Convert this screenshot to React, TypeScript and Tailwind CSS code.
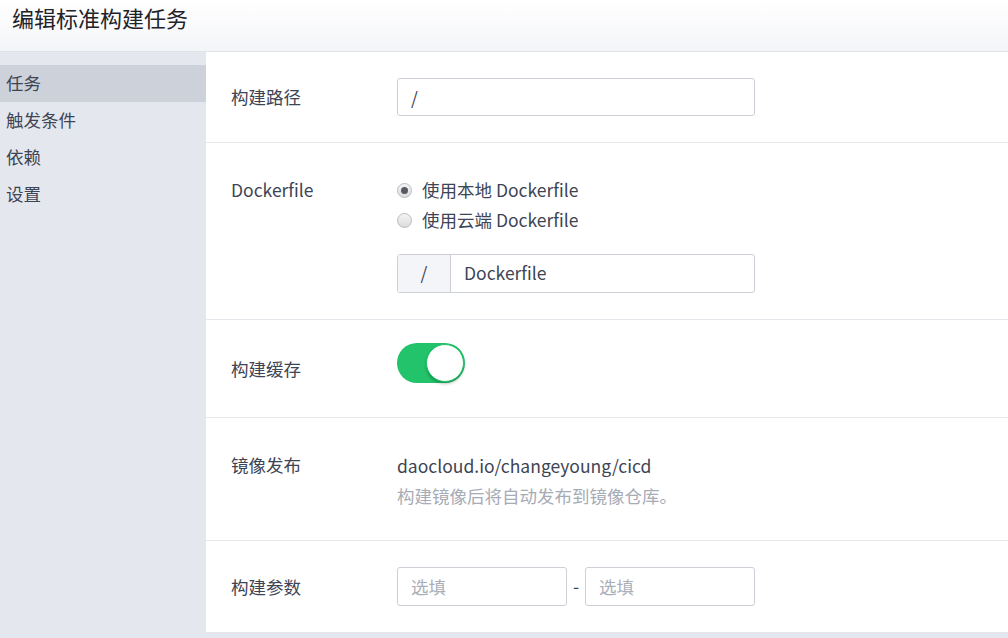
import React, { useState } from 'react';

const font = 'font-["Noto_Sans_CJK_SC","Noto_Sans",sans-serif]';

const navItems = ['任务', '触发条件', '依赖', '设置'];

function Row({ label, className, children }: { label: string; className: string; children: React.ReactNode }) {
  return (
    <div className={`flex border-b border-[#e4e6ec] pl-[25px] ${className}`}>
      <div className="w-[166px] shrink-0 text-[17.5px] leading-6 text-[#3d4454]">{label}</div>
      <div className="flex-1">{children}</div>
    </div>
  );
}

function Radio({ checked, label }: { checked: boolean; label: string }) {
  return (
    <label className="flex h-[30px] items-center gap-[10px] text-[17.5px] text-[#3d4454]">
      <span className="flex h-[15px] w-[15px] items-center justify-center rounded-full border border-[#b9bcc4] bg-gradient-to-b from-[#f4f4f4] to-[#dcdcdc]">
        {checked && <span className="h-[7px] w-[7px] rounded-full bg-[#555a63]" />}
      </span>
      {label}
    </label>
  );
}

export default function App() {
  const [active, setActive] = useState(0);
  const [local, setLocal] = useState(true);
  const [cache, setCache] = useState(true);

  return (
    <div className={`h-[638px] w-[1008px] overflow-hidden bg-[#e4e7ee] ${font}`}>
      {/* header */}
      <div className="flex h-[52px] items-start border-b border-[#e0e2e7] bg-gradient-to-b from-white to-[#f4f5f8] pl-[12px] pt-[3px]">
        <h1 className="text-[22px] leading-7 text-[#1f2329]">编辑标准构建任务</h1>
      </div>

      <div className="flex">
        {/* sidebar */}
        <aside className="w-[206px] shrink-0 pt-[13px]">
          {navItems.map((item, i) => (
            <div
              key={item}
              onClick={() => setActive(i)}
              className={`flex h-[37px] items-center pl-[6px] text-[17.5px] text-[#3d4454] ${i === active ? 'bg-[#cdd1da]' : ''}`}
            >
              {item}
            </div>
          ))}
        </aside>

        {/* form */}
        <main className="flex-1 bg-white">
          <Row label="构建路径" className="h-[91px] items-center">
            <input
              defaultValue="/"
              className="h-[38px] w-[358px] rounded-[3px] border border-[#cdcfd7] px-[13px] text-[17.5px] text-[#3d4454] outline-none"
            />
          </Row>

          <Row label="Dockerfile" className="h-[177px] pt-[35px]">
            <div className="-mt-[3px]">
              <div onClick={() => setLocal(true)}><Radio checked={local} label="使用本地 Dockerfile" /></div>
              <div onClick={() => setLocal(false)}><Radio checked={!local} label="使用云端 Dockerfile" /></div>
              <div className="mt-[19px] flex h-[39px] w-[358px] rounded-[3px] border border-[#cdcfd7] text-[17.5px] text-[#3d4454]">
                <span className="flex w-[53px] items-center justify-center border-r border-[#cdcfd7] bg-[#f4f5f8]">/</span>
                <span className="flex items-center pl-[13px]">Dockerfile</span>
              </div>
            </div>
          </Row>

          <Row label="构建缓存" className="h-[98px] items-center">
            <button
              onClick={() => setCache(!cache)}
              className={`-mt-[12px] flex h-[40px] w-[68px] items-center rounded-full p-[1px] ${cache ? 'justify-end bg-[#22c36b]' : 'justify-start bg-[#dcdfe5]'}`}
            >
              <span className="h-[38px] w-[38px] rounded-full border border-[#22c36b] bg-white shadow-[0_2px_3px_rgba(0,0,0,0.25)]" />
            </button>
          </Row>

          <Row label="镜像发布" className="h-[123px] pt-[35px]">
            <div className="-mt-[2px] text-[17.5px] leading-[30px]">
              <div className="text-[#3d4454]">daocloud.io/changeyoung/cicd</div>
              <div className="text-[#a6abb6]">构建镜像后将自动发布到镜像仓库。</div>
            </div>
          </Row>

          <Row label="构建参数" className="h-[92px] items-center">
            <div className="flex items-center">
              <input placeholder="选填" className="h-[39px] w-[170px] rounded-[3px] border border-[#cdcfd7] px-[13px] text-[17.5px] placeholder:text-[#a9aeb8] outline-none" />
              <span className="w-[18px] text-center text-[17.5px] text-[#3d4454]">-</span>
              <input placeholder="选填" className="h-[39px] w-[170px] rounded-[3px] border border-[#cdcfd7] px-[13px] text-[17.5px] placeholder:text-[#a9aeb8] outline-none" />
            </div>
          </Row>
        </main>
      </div>
    </div>
  );
}
